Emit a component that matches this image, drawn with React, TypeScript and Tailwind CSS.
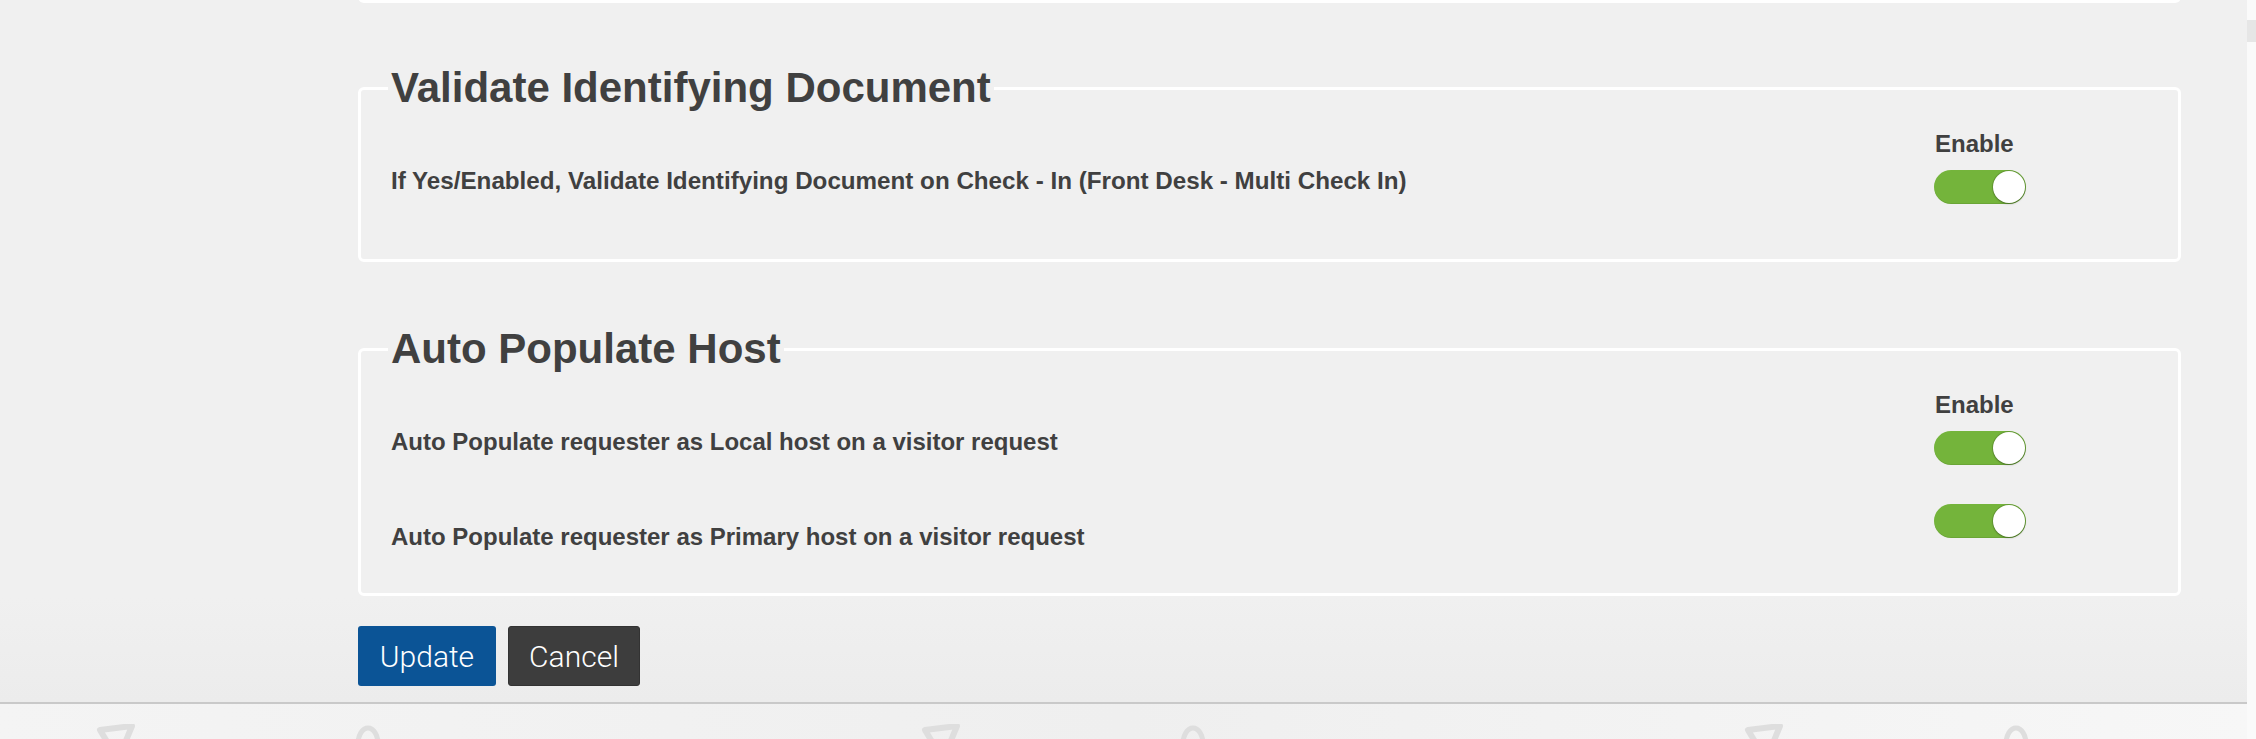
import React from "react";

const sans = "font-['Liberation_Sans',Arial,Helvetica,sans-serif]";

function Toggle() {
  return (
    <div className="flex h-[34px] w-[92px] items-center justify-end rounded-full bg-[#74b43b] pr-[1px] shadow-[inset_0_-1px_0_rgba(0,0,0,0.08)]">
      <span className="h-[32px] w-[32px] rounded-full bg-white shadow-[0_0_0_1px_rgba(0,0,0,0.12),0_1px_2px_rgba(0,0,0,0.25)]" />
    </div>
  );
}

interface SectionProps {
  title: string;
  rows: string[];
  className?: string;
  textClass?: string;
}

function Section({ title, rows, className = "", textClass = "text-[24px]" }: SectionProps) {
  return (
    <fieldset className={`rounded-[6px] border-[3px] border-white px-[27px] ${className}`}>
      <legend className="px-[3px] text-[42px] font-bold leading-[46px] text-[#404040]">
        {title}
      </legend>
      <div className="flex items-start pl-[3px]">
        {/* Left: descriptions */}
        <div className="flex flex-1 flex-col gap-[66px] pt-[55px]">
          {rows.map((r) => (
            <p key={r} className={`${textClass} font-bold leading-[29px] text-[#404040]`}>
              {r}
            </p>
          ))}
        </div>

        {/* Right: Enable toggles */}
        <div className="mr-[125px] flex w-[92px] flex-col pt-[18px]">
          <span className="pl-[1px] text-[24px] font-bold leading-[29px] text-[#404040]">
            Enable
          </span>
          <div className="mt-[12px] flex flex-col gap-[39px]">
            {rows.map((r) => (
              <Toggle key={r} />
            ))}
          </div>
        </div>
      </div>
    </fieldset>
  );
}

function Watermark({ kind }: { kind: "tri" | "circle" }) {
  if (kind === "tri") {
    return (
      <svg width="40" height="40" viewBox="0 0 40 40" className="shrink-0">
        <path
          d="M4 6 L36 2 L22 36 Z"
          fill="none"
          stroke="#dedede"
          strokeWidth="6"
          strokeLinejoin="round"
        />
      </svg>
    );
  }
  return (
    <svg width="28" height="40" viewBox="0 0 28 40" className="shrink-0">
      <ellipse cx="14" cy="20" rx="10" ry="16" fill="none" stroke="#dedede" strokeWidth="5" />
    </svg>
  );
}

export default function App() {
  return (
    <div className={`flex h-[739px] w-[2256px] overflow-hidden bg-[#f0f0f0] ${sans}`}>
      <div className="flex min-w-0 flex-1 flex-col">
        {/* Content */}
        <div className="h-[702px] bg-gradient-to-b from-[#f0f0f0] from-85% to-[#ececec] pl-[358px] pr-[66px]">
          {/* bottom of previous section */}
          <div className="-mt-[10px] h-[13px] rounded-b-[6px] border-[3px] border-t-0 border-white" />

          <Section
            className="mt-[62px] pb-[55px]"
            textClass="text-[24.2px]"
            title="Validate Identifying Document"
            rows={[
              "If Yes/Enabled, Validate Identifying Document on Check - In (Front Desk - Multi Check In)",
            ]}
          />

          <Section
            className="mt-[64px] pb-[42px]"
            title="Auto Populate Host"
            rows={[
              "Auto Populate requester as Local host on a visitor request",
              "Auto Populate requester as Primary host on a visitor request",
            ]}
          />

          <div className="mt-[30px] flex gap-[12px]">
            <button className="h-[60px] w-[138px] rounded-[3px] bg-[#0b5496] font-['Roboto','Liberation_Sans',sans-serif] text-[30px] font-light text-white">
              Update
            </button>
            <button className="h-[60px] w-[132px] rounded-[3px] border border-[#333] bg-[#3d3d3d] font-['Roboto','Liberation_Sans',sans-serif] text-[30px] font-light text-white">
              Cancel
            </button>
          </div>
        </div>

        {/* Footer */}
        <div className="h-[2px] bg-[#c9c9c9]" />
        <div className="relative flex-1 overflow-hidden bg-gradient-to-r from-[#f4f4f4] via-[#efefef] to-[#f7f7f7]">
          <div className="absolute left-[96px] top-[20px] flex gap-[218px]">
            <Watermark kind="tri" />
            <Watermark kind="circle" />
          </div>
          <div className="absolute left-[921px] top-[20px] flex gap-[218px]">
            <Watermark kind="tri" />
            <Watermark kind="circle" />
          </div>
          <div className="absolute left-[1744px] top-[20px] flex gap-[218px]">
            <Watermark kind="tri" />
            <Watermark kind="circle" />
          </div>
        </div>
      </div>

      {/* Scrollbar */}
      <div className="w-[9px] bg-[#fafafa] pt-[20px]">
        <div className="h-[22px] w-full bg-[#e6e6e6]" />
      </div>
    </div>
  );
}
